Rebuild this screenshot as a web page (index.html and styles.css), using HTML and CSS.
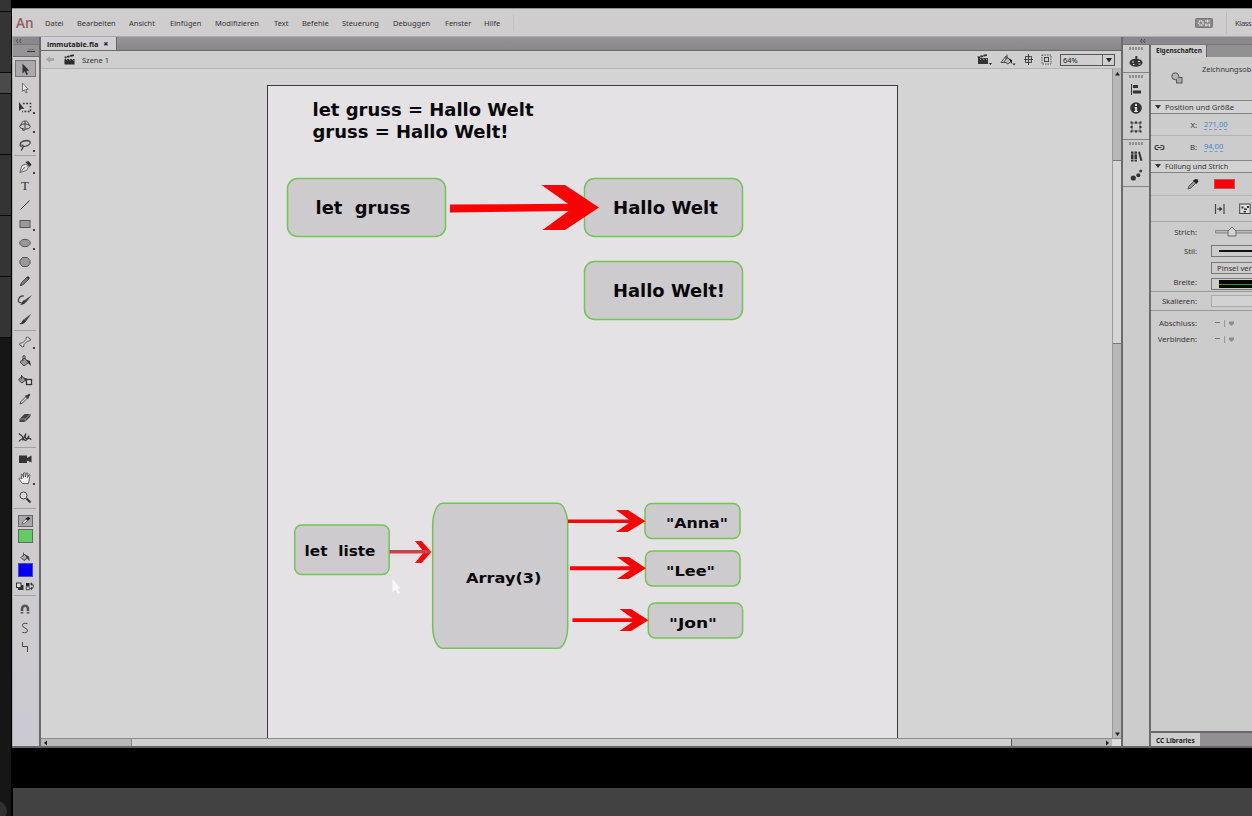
FILE: index.html
```html
<!DOCTYPE html>
<html lang="de">
<head>
<meta charset="utf-8">
<title>immutable.fla</title>
<link rel="stylesheet" href="styles.css">
</head>
<body>
<div class="screen">
<aside class="edge"><i class="e1"></i><i class="e2"></i><i class="e3"></i><i class="e2"></i><i class="e2"></i><i class="e2"></i><i class="e2"></i><i class="e4"></i><svg width="11" height="20" viewBox="0 0 11 20"><circle cx="-3" cy="15" r="10" fill="#303030"/></svg></aside>
<div class="main">
<div class="app">
<header class="menubar">
  <span class="logo">An</span>
  <nav class="menu"><span>Datei</span><span>Bearbeiten</span><span>Ansicht</span><span>Einfügen</span><span>Modifizieren</span><span>Text</span><span>Befehle</span><span>Steuerung</span><span>Debuggen</span><span>Fenster</span><span>Hilfe</span></nav>
  <div class="workspace">
    <svg width="18" height="10" viewBox="0 0 18 10"><rect x=".5" y=".5" width="17" height="9" rx="1" fill="#8b888a" stroke="#777"/><circle cx="6" cy="5" r="2.2" fill="none" stroke="#ddd" stroke-width="1.6" stroke-dasharray="1.2 .6"/><path d="M10 3h5M12.5 1.5v3M10 7h5M11 5.5v3M14.5 5.5v3" stroke="#ddd"/></svg>
    <span class="ws-name">Klass</span>
  </div>
</header>
<div class="body">
<div class="tools">
  <div class="tools-head"><span class="strip"><svg width="6" height="4" viewBox="0 0 6 4"><path d="M2 0L.5 2 2 4M5 0L3.5 2 5 4" fill="none" stroke="#444" stroke-width=".8"/></svg></span><span class="grip"><svg width="8" height="5" viewBox="0 0 8 5"><path d="M1 1.500h6" stroke="#777"/><path d="M0 3.500h8" stroke="#333"/></svg></span></div>
  <div class="group g1">
    <div class="tool on"><svg width="16" height="16" viewBox="0 0 16 16"><path d="M5.500 2.500v10l2.300-2.200 1.600 3.700 1.600-.8-1.600-3.400h3z" fill="#333"/></svg></div>
    <div class="tool"><svg width="16" height="16" viewBox="0 0 16 16"><path d="M5.500 3v8.500l1.900-1.800 1.500 3.300 1.200-.6-1.400-3.100h2.600z" fill="#eee" stroke="#555" stroke-width=".8"/></svg></div>
    <div class="tool more"><svg width="16" height="16" viewBox="0 0 16 16"><path d="M2 3v9l2.500-2.200 2.800.1z" fill="#333"/><path d="M6 4.500h7.500v8H5" fill="none" stroke="#333" stroke-width="1.500" stroke-dasharray="1.700 1.600"/></svg></div>
    <div class="tool more"><svg width="16" height="16" viewBox="0 0 16 16"><ellipse cx="8" cy="8.500" rx="5.300" ry="2.600" fill="none" stroke="#444"/><path d="M4 8Q4 3 8 3t4 5" fill="none" stroke="#555"/><path d="M8 3v7M9 10.500l-2.500 2.500M5 10l1.500 3" fill="none" stroke="#444"/></svg></div>
    <div class="tool more"><svg width="16" height="16" viewBox="0 0 16 16"><path d="M4.500 10Q2 8 4 5.500 6 3.500 10 3.500 14 4 13 6.500 11 9.500 6 9.500M4.500 8q2 0 1.500 2T4 13.500" fill="none" stroke="#444" stroke-width="1.300"/></svg></div>
  </div>
  <div class="group g2">
    <div class="tool more"><svg width="16" height="16" viewBox="0 0 16 16"><path d="M3 13.500q1-5 2-7l4-1.500 2.500 3-2 3.500zM3 13.500L8 8" fill="#ddd" stroke="#555" stroke-width=".8"/><path d="M8.500 3l3-1 3 3.500-2 2.500z" fill="#333"/></svg></div>
    <div class="tool"><span class="type">T</span></div>
    <div class="tool"><svg width="16" height="16" viewBox="0 0 16 16"><path d="M3.500 12.500l9-9" stroke="#333"/></svg></div>
    <div class="tool more"><svg width="16" height="16" viewBox="0 0 16 16"><rect x="3" y="4.500" width="10" height="7" fill="#999" stroke="#555"/></svg></div>
    <div class="tool more"><svg width="16" height="16" viewBox="0 0 16 16"><ellipse cx="8" cy="8" rx="5.300" ry="3.700" fill="#999" stroke="#555"/></svg></div>
    <div class="tool"><svg width="16" height="16" viewBox="0 0 16 16"><path d="M5.500 3.500h5L13 6.500v3l-2.500 3h-5L3 9.500v-3z" fill="#999" stroke="#555"/></svg></div>
    <div class="tool"><svg width="16" height="16" viewBox="0 0 16 16"><path d="M3.500 12.500l1-3L10 4l2 2-5.500 5.500z" fill="#777" stroke="#444" stroke-width=".8"/><path d="M9.500 4.500L11 3l2 2-1.500 1.500zM3 13l.7-2 1.300 1.300z" fill="#333"/></svg></div>
    <div class="tool"><svg width="16" height="16" viewBox="0 0 16 16"><path d="M7 4Q3 3.500 1.500 7q-1 4 3 3.500" fill="none" stroke="#444" stroke-width="1.200"/><path d="M15 3L9 10.500 7 8.500z" fill="#444"/><path d="M7 8l2 2q-2 3.500-6 2.500 2-.7 2.200-2.500z" fill="#333"/></svg></div>
    <div class="tool"><svg width="16" height="16" viewBox="0 0 16 16"><path d="M14.500 2.500L9.300 10 7.300 8z" fill="#444"/><path d="M7 8l2.300 2q-2.300 3.800-7 3 2.500-1 3-3z" fill="#333"/></svg></div>
  </div>
  <div class="group g3">
    <div class="tool more"><svg width="16" height="16" viewBox="0 0 16 16"><path d="M5.500 9L9 5.500Q8.500 3 10.500 3 12 3 12 4.500 13.800 4.500 13.500 6 13 7.500 10.500 7L7 10.500Q7.500 13 5.500 13 4.300 13 4.200 11.500 2.500 11.500 2.500 10 3 8.500 5.500 9z" fill="#ddd" stroke="#444" stroke-width=".9"/></svg></div>
    <div class="tool"><svg width="16" height="16" viewBox="0 0 16 16"><path d="M3 9l4.500-4 4 4.500-4.500 3.500z" fill="#999" stroke="#444"/><path d="M6 8V3q1.500-1 2 0v3" fill="none" stroke="#444"/><path d="M9 6.500l4 1.500 1 5-2.500-2.500z" fill="#333"/></svg></div>
    <div class="tool"><svg width="16" height="16" viewBox="0 0 16 16"><path d="M1.500 8l3.500-4 3.500 4L5 11z" fill="#999" stroke="#444"/><path d="M4.500 7V3M7 6l3 1v4L8.500 8z" stroke="#444" fill="#333"/><rect x="9.500" y="7.500" width="5" height="5" fill="#ddd" stroke="#333" stroke-width="1.300"/></svg></div>
    <div class="tool"><svg width="16" height="16" viewBox="0 0 16 16"><path d="M3 13l1-2.500L9 5.500 10.500 7l-5 5z" fill="#ddd" stroke="#444"/><path d="M8 5l1-1 1 .5L12 2.500l1.500 1.500-2 2 .5 1-1 1z" fill="#333"/></svg></div>
    <div class="tool"><svg width="16" height="16" viewBox="0 0 16 16"><path d="M2.500 9l5-5H14l-1 3-5 5H2.500z" fill="#444"/><path d="M3 9h5.500l5-5M8.500 9l-.5 3" fill="none" stroke="#aaa" stroke-width=".7"/></svg></div>
    <div class="tool"><svg width="16" height="16" viewBox="0 0 16 16"><path d="M2 4.500l3.500 3 .5 3 3-6q-1.500 4 0 5t3-3M2 12.500q3-4 5-2t4-1q2-1 3 1.500" fill="none" stroke="#333" stroke-width="1.200"/></svg></div>
  </div>
  <div class="group g4">
    <div class="tool"><svg width="16" height="16" viewBox="0 0 16 16"><path d="M2 4.500h8V7l4.500-2.500v7L10 9.500V12H2z" fill="#333"/></svg></div>
    <div class="tool more"><svg width="16" height="16" viewBox="0 0 16 16"><path d="M5.500 13.500L2 9q0-1.500 1.500-1L5 9 4 4.500q1-1 1.500.3L6.500 7.500 6.500 3q1-1 1.500 0l.3 4L9.500 3q1-.7 1.300.3L10.500 7.500 12 4.800q1.200-.4 1 .8L11.500 13.500z" fill="#eee" stroke="#444" stroke-width=".8"/></svg></div>
    <div class="tool"><svg width="16" height="16" viewBox="0 0 16 16"><circle cx="6.500" cy="6.500" r="3.500" fill="#ddd" stroke="#444"/><path d="M9.500 9.500l4 4" stroke="#333" stroke-width="2"/></svg></div>
  </div>
  <div class="group g5">
    <div class="swatch-btn"><svg width="13" height="10" viewBox="0 0 14 11"><path d="M3 9l1-2.500L9 2l2 1.500L6 8z" fill="#ddd" stroke="#333" stroke-width=".7"/><path d="M7 3L10 .8l2.500 2-3 2.500z" fill="#222"/></svg></div>
    <div class="swatch green"></div>
    <div class="bucket"><svg width="16" height="14" viewBox="0 0 16 14"><path d="M4 8.500l3.500-3.500 3 4-3.500 2.500z" fill="#aaa" stroke="#444"/><path d="M6.500 7V3.500M9 6.500l2.500 1 .8 4-1.800-2z" stroke="#444" stroke-width=".8" fill="#333"/></svg></div>
    <div class="swatch blue"></div>
    <div class="swap"><svg width="20" height="9" viewBox="0 0 20 9"><rect x="3.500" y="3.500" width="4.500" height="4" fill="#333" stroke="#333"/><rect x="1.500" y="1" width="4.500" height="4.500" fill="#ddd" stroke="#333"/><rect x="11" y="1" width="3.500" height="3" fill="#222"/><rect x="11.300" y="4.800" width="3" height="3" fill="#ddd" stroke="#333" stroke-width=".8"/><path d="M16 2h1.500q2 2.500 0 4.500H16" fill="none" stroke="#333"/><path d="M17 .3v3.400L15 2zM17 4.800v3.400L15 6.500z" fill="#333"/></svg></div>
  </div>
  <div class="group g6">
    <div class="tool"><svg width="16" height="16" viewBox="0 0 16 16"><path d="M5 12.500V7.800a3 3 0 0 1 6 0v4.700" fill="none" stroke="#555" stroke-width="2.600"/><path d="M3.500 10.500h3M9.500 10.500h3" stroke="#ddd" stroke-width=".8"/></svg></div>
    <div class="tool"><svg width="16" height="16" viewBox="0 0 16 16"><path d="M10.500 3.700Q5.500 2.300 5.500 5.300 5.500 7 8 8q2.600 1 2.500 2.800Q10 13.500 5.300 12.300" fill="none" stroke="#444"/></svg></div>
    <div class="tool"><svg width="16" height="16" viewBox="0 0 16 16"><path d="M5.500 3v4.500h5V13" fill="none" stroke="#444"/></svg></div>
  </div>
</div>
<div class="doc">
  <div class="tabs"><div class="tab"><span>immutable.fla</span><b>×</b></div></div>
  <div class="scenebar">
    <svg width="8" height="7" viewBox="0 0 8 7"><path d="M0 3.500L4 0v2h4v3H4v2z" fill="#a5a5a5"/></svg>
    <svg class="clap" width="11" height="11" viewBox="0 0 11 11"><path d="M.5 5h10v5.500H.5zM.3 2.800L9.500.3l.6 1.700L1 4.500z" fill="#2b2b2b"/><path d="M2 2l1.500 2M5 1.200l1.500 2M2 5l1.300 1.500M5 5l1.300 1.500M8 5l1.300 1.500" stroke="#ccc" stroke-width=".8"/></svg>
    <span class="scene">Szene 1</span>
    <div class="sceneicons">
      <svg width="16" height="13" viewBox="0 0 16 13"><path d="M1 5h10v6H1zM.5 3.500L9.500 1l.6 1.700L1 5.500z" fill="#333"/><path d="M2.500 3l1.500 2M5.500 2l1.500 2M3 5.500l1 1.500M6 5.500l1 1.500M9 5.500l1 1.500" stroke="#ccc" stroke-width=".7"/><path d="M12 10h3l-1.500 2z" fill="#222"/></svg>
      <svg width="16" height="13" viewBox="0 0 16 13"><path d="M1 9.500L6 3v6.500z" fill="#ddd" stroke="#444"/><path d="M4 8.500l3.500-4 4 3.500-3.500 3z" fill="#bbb" stroke="#444"/><path d="M7 6V1.500" stroke="#444"/><path d="M9 5.500l3 1.500v4l-1.500-2z" fill="#222"/><path d="M12.500 10.500h3l-1.500 2z" fill="#222"/></svg>
      <svg width="11" height="13" viewBox="0 0 11 13"><path d="M5.500 1v11M1 6.500h9M2.500 3.500h6v6h-6z" fill="none" stroke="#444"/></svg>
      <svg width="11" height="13" viewBox="0 0 11 13"><rect x="1" y="2" width="9" height="9" fill="none" stroke="#555" stroke-dasharray="1.500 1"/><rect x="3.500" y="4.500" width="4" height="4" fill="none" stroke="#444"/></svg>
    </div>
    <div class="zoom"><span>64%</span><i><svg width="6" height="5" viewBox="0 0 6 5"><path d="M0 0h6L3 4.500z" fill="#222"/></svg></i></div>
  </div>
  <div class="view">
    <svg class="stage" width="1071" height="669" viewBox="41 69 1071 669">
      <rect x="267.500" y="85.500" width="630" height="660" fill="#e4e2e4" stroke="#3c3a3c"/>
      <g fill="#cdcbcd" stroke="#71c556" stroke-width="1.500">
        <rect x="287.500" y="178.500" width="158" height="58" rx="10"/>
        <rect x="584.500" y="178.500" width="158" height="58" rx="10"/>
        <rect x="584.500" y="261.500" width="158" height="58" rx="10"/>
        <rect x="294.700" y="525" width="94.500" height="49.500" rx="7"/>
        <rect x="432.700" y="503.300" width="135" height="145" rx="10" ry="22"/>
        <rect x="645" y="503.500" width="95" height="35" rx="7"/>
        <rect x="645.500" y="551" width="94.500" height="35" rx="7"/>
        <rect x="648.300" y="603" width="94.300" height="35" rx="7"/>
      </g>
      <g fill="#fe0000">
        <path d="M450 204.500L568 203.800 541.500 185H565L599 207.500 565 230H542.500L568.500 211 450 212.500z"/>
        <path d="M568 519.500H629L616 510H628L645.500 521.300 627.500 532H616L629 523H568z"/>
        <path d="M570 566.300H630L617 557H629L646 568.300 628.500 579H617L630 570.200H570z"/>
        <path d="M572.500 618.300H632.500L619.500 609H631L648.500 620.300 631 631H619.500L632.500 622H572.500z"/>
        <path d="M415 541H421.500L431.500 552 421.500 563H415L424 552z"/>
        <path d="M389.500 550H429L431.500 552 429 553.600H389.500z" fill="#cb4348"/>
      </g>
      <path d="M392.500 579v13l3-2.500 2.500 4.500 2-1-2.500-4.500h3z" fill="#f8f8fc"/>
      <g class="label">
        <text x="312.500" y="115.700" textLength="221" lengthAdjust="spacingAndGlyphs">let gruss = Hallo Welt</text>
        <text x="312.500" y="137.700" textLength="196" lengthAdjust="spacingAndGlyphs">gruss = Hallo Welt!</text>
        <text x="315.500" y="214.300" textLength="95" lengthAdjust="spacingAndGlyphs">let  gruss</text>
        <text x="613" y="214.300" textLength="105" lengthAdjust="spacingAndGlyphs">Hallo Welt</text>
        <text x="613" y="297" textLength="112" lengthAdjust="spacingAndGlyphs">Hallo Welt!</text>
      </g>
      <g class="label small">
        <text x="304.500" y="556.200" textLength="71" lengthAdjust="spacingAndGlyphs">let  liste</text>
        <text x="466" y="582.600" textLength="75.500" lengthAdjust="spacingAndGlyphs">Array(3)</text>
        <text x="666" y="528" textLength="62" lengthAdjust="spacingAndGlyphs">"Anna"</text>
        <text x="666" y="575.500" textLength="49" lengthAdjust="spacingAndGlyphs">"Lee"</text>
        <text x="669" y="627.700" textLength="48" lengthAdjust="spacingAndGlyphs">"Jon"</text>
      </g>
    </svg>
    <div class="vscroll"><i class="trk a"><svg width="7" height="5" viewBox="0 0 7 5"><path d="M3.500 0l2.500 3.500H1z" fill="#222"/></svg></i><i class="thumb"></i><i class="trk b"><svg width="7" height="5" viewBox="0 0 7 5"><path d="M3.500 4L6 .5H1z" fill="#222"/></svg></i></div>
  </div>
  <div class="hscroll"><i class="htrk ha"><svg width="5" height="6" viewBox="0 0 5 6"><path d="M0 3l3-2.500v5z" fill="#222"/></svg></i><i class="hthumb"></i><i class="htrk hb"><svg width="5" height="6" viewBox="0 0 5 6"><path d="M4 3L1 .5v5z" fill="#222"/></svg></i><i class="corner"></i></div>
</div>
<div class="right">
  <div class="rstrip"><svg width="6" height="4" viewBox="0 0 6 4"><path d="M2 0L.5 2 2 4M5 0L3.500 2 5 4" fill="none" stroke="#333" stroke-width=".8"/></svg></div>
  <div class="rcols">
  <div class="dock">
    <div class="dgroup d1"><i class="dots"></i><div class="dicon"><svg width="14" height="12" viewBox="0 0 14 12"><ellipse cx="7" cy="6.700" rx="6.500" ry="4" fill="#333"/><path d="M3 6h2M4 8.500h1.500M9 5.500h2M9.500 8h2" stroke="#ddd" stroke-width="1.200"/><path d="M7.300 0v9" stroke="#333" stroke-width="2"/></svg></div></div>
    <div class="dgroup d2"><i class="dots"></i>
      <div class="dicon"><svg width="12" height="12" viewBox="0 0 12 12"><path d="M1.500 1v11" stroke="#333"/><path d="M3 2h5v3H3zM3 7.500h8v3H3z" fill="#333"/></svg></div>
      <div class="dicon"><svg width="12" height="12" viewBox="0 0 12 12"><circle cx="6" cy="6" r="5.800" fill="#333"/><path d="M5 2h2v2H5zM4.500 5H7v4h1v1H4V9h1V6h-.5z" fill="#ddd"/></svg></div>
      <div class="dicon"><svg width="12" height="12" viewBox="0 0 12 12"><rect x="2" y="2" width="8" height="8" fill="none" stroke="#666"/><path d="M.5.500h2v2h-2zM5 .5h2v2H5zM9.500.5h2v2h-2zM.5 5h2v2h-2zM9.500 5h2v2h-2zM.5 9.500h2v2h-2zM5 9.500h2v2H5zM9.500 9.500h2v2h-2z" fill="#333"/></svg></div>
    </div>
    <div class="dgroup d3"><i class="dots"></i>
      <div class="dicon"><svg width="13" height="12" viewBox="0 0 13 12"><path d="M1 1.500h2.500v10H1zM4.500 1.500H7v10H4.500zM8 2l1.800-.6 2.700 9-2 .7z" fill="#333"/><path d="M1 4h2.500M4.500 4H7M1 9.500h6" stroke="#bbb" stroke-width=".7"/></svg></div>
      <div class="dicon"><svg width="13" height="12" viewBox="0 0 13 12"><circle cx="3.300" cy="9" r="2.600" fill="#333"/><circle cx="8.300" cy="6.300" r="2" fill="#333"/><circle cx="10.700" cy="2" r="1.600" fill="#444"/></svg></div>
    </div>
  </div>
  <div class="panel">
    <div class="ptabs"><span class="ptab">Eigenschaften</span></div>
    <div class="phead"><svg width="12" height="12" viewBox="0 0 12 12"><rect x="5.500" y="5.500" width="5.500" height="5.500" fill="#aaa" stroke="#555"/><circle cx="4.300" cy="4.300" r="3.500" fill="#b4b4b4" stroke="#555"/><path d="M6 6h3v3H6z" fill="#aaa"/></svg><span>Zeichnungsob</span></div>
    <div class="psec"><svg width="6" height="4" viewBox="0 0 6 4"><path d="M0 0h6L3 4z" fill="#333"/></svg><span>Position und Größe</span></div>
    <div class="prow rx"><span class="lab">X:</span><a>271,00</a></div>
    <div class="prow rb"><svg width="11" height="7" viewBox="0 0 11 7"><path d="M4.500 1.500H3a2 2 0 0 0 0 4h1.500M6.500 1.500H8a2 2 0 0 1 0 4H6.500M3.500 3.500h4" fill="none" stroke="#333" stroke-width="1.100"/></svg><span class="lab">B:</span><a>94,00</a></div>
    <div class="psec s2"><svg width="6" height="4" viewBox="0 0 6 4"><path d="M0 0h6L3 4z" fill="#333"/></svg><span>Füllung und Strich</span></div>
    <div class="prow rc"><svg width="12" height="12" viewBox="0 0 12 12"><path d="M1 11l1-3 5-5 2 2-5 5z" fill="#999" stroke="#444" stroke-width=".8"/><path d="M6 2.500L8.500 1l2.500.5.3 2L9.500 6z" fill="#222"/></svg><i class="red"></i></div>
    <div class="prow ri"><svg width="12" height="12" viewBox="0 0 12 12"><path d="M1.500 1v10M10 1v10" stroke="#444" stroke-width="1.200"/><path d="M3 6h3" stroke="#333"/><path d="M5.500 3.500L8.500 6l-3 2.500z" fill="#333"/></svg><svg width="12" height="12" viewBox="0 0 12 12"><rect x=".7" y="1" width="10.500" height="9.500" fill="#ddd" stroke="#444"/><path d="M2.500 3.500h2v2h-2zM5 5.500h3v1.500H5zM8 3h2v2H8zM4.500 8h2.500v1.500H4.500z" fill="#333"/></svg></div>
    <div class="prow rs"><span class="lab">Strich:</span><svg width="41" height="12" viewBox="0 0 41 12"><path d="M.5 4.500H41v2.500H.5z" fill="#bbb" stroke="#777" stroke-width=".8"/><path d="M13 10V5L17 1l4 4v5z" fill="#d4d2d4" stroke="#666"/></svg></div>
    <div class="prow rt"><span class="lab">Stil:</span><div class="field"><i class="line"></i></div></div>
    <div class="prow rp"><div class="field btn">Pinsel ver</div></div>
    <div class="prow rw"><span class="lab">Breite:</span><div class="field"><i class="profile"></i></div></div>
    <div class="prow rk"><span class="lab">Skalieren:</span><div class="field off"></div></div>
    <div class="prow ra"><span class="lab">Abschluss:</span><svg width="22" height="8" viewBox="0 0 22 8"><path d="M2 3.500h5" stroke="#777"/><path d="M11.500 1v7" stroke="#999"/><path d="M16 2.500h5v2L18.500 7 16 4.500z" fill="#8d8d8d"/></svg></div>
    <div class="prow ra"><span class="lab">Verbinden:</span><svg width="22" height="8" viewBox="0 0 22 8"><path d="M2 3.500h5" stroke="#777"/><path d="M11.500 1v7" stroke="#999"/><path d="M16 2.500h5v2L18.500 7 16 4.500z" fill="#8d8d8d"/></svg></div>
    <div class="cc"><span>CC Libraries</span></div>
  </div>
  </div>
</div>
</div>
</div>
<footer class="bottom"></footer>
</div>
</div>
</body>
</html>
```

FILE: styles.css
```css
* { box-sizing: border-box; }
html, body { margin: 0; background: #000; overflow: hidden; }
body { font-family: "Noto Sans", "Open Sans", sans-serif; font-size: 7.5px; line-height: 10px; color: #333; }
svg { display: block; flex: none; }
i { font-style: normal; display: block; }
span { white-space: pre; }
.screen { width: 1252px; height: 816px; display: flex; overflow: hidden; background: #000; }

.edge { width: 11px; margin-right: 1px; flex: none; display: flex; flex-direction: column; }
.edge i { border-bottom: 1px solid #0a0a0a; background: #343434; flex: none; }
.edge .e1 { height: 12px; }
.edge .e2 { height: 61px; }
.edge .e3 { height: 21px; background: #4a4a4a; }
.edge .e4 { flex: 1; background: #161616; border: 0; }
.edge svg { background: #161616; }

.main { flex: 1; min-width: 0; display: flex; flex-direction: column; }
.app { margin-top: 8px; height: 740px; display: flex; flex-direction: column; border-top: 1px solid #929092; border-bottom: 2px solid #666; background: #cdcccd; }
.bottom { height: 28px; margin: 40px 0 0 1px; background: #424242; }

.menubar { height: 28px; flex: none; display: flex; align-items: center; background: #d0cdcf; border-bottom: 1px solid #aba9ab; }
.logo { width: 33px; padding-left: 4px; font: 600 13.5px/16px "Open Sans", sans-serif; color: #925f59; }
.menu { display: grid; grid-template-columns: 32px 52px 41px 45px 59px 28px 40px 51px 52px 39px 29px; height: 17px; align-items: center; border-right: 1px solid #c5c1c4; }
.workspace { margin-left: auto; display: flex; align-items: center; height: 27px; }
.ws-name { margin-left: 13px; padding-left: 8px; width: 26px; line-height: 22px; border-left: 1px solid #bfbcbe; letter-spacing: -.35px; }

.body { flex: 1; min-height: 0; display: flex; }
.tools { width: 29px; flex: none; border-right: 2px solid #6b6a6b; border-left: 1px solid #aaa; background: linear-gradient(#cecccd 70%, #cbcad0); }
.tools-head { height: 20px; background: #969496; border-bottom: 1px solid #6e6d6e; }
.strip { display: flex; height: 8px; padding: 2px 0 0 3px; border-bottom: 1px solid #7b7a7b; background: #8a888a; }
.grip { display: flex; height: 11px; justify-content: flex-end; padding: 3px 4px 0 0; }
.group { display: flex; flex-direction: column; align-items: center; margin: 0 3px 0 1px; border-bottom: 1px solid #a3a2a3; }
.tool { position: relative; width: 22px; height: 19px; display: flex; justify-content: center; align-items: center; }
.tool.on { width: 21px; height: 17px; margin: 1px 0; background: #aaa8aa; border: 1px solid #747274; }
.tool.more::after { content: ""; position: absolute; right: 1px; bottom: 2px; width: 2px; height: 2px; background: #444; }
.type { font: 13px/16px "Liberation Serif", serif; }
.g1 { height: 99px; padding-top: 2px; }
.g2 { height: 175px; padding-top: 1px; }
.g3 { height: 117px; padding-top: 1px; }
.g4 { height: 61px; padding-top: 1px; }
.g5 { height: 87px; padding-top: 6px; }
.g6 { height: 62px; padding-top: 3px; border: 0; }
.swatch-btn { width: 15px; height: 12px; background: #a9a7a9; border: 1px solid #666; }
.swatch { width: 15px; height: 14px; border: 1px solid #666; }
.green { margin-top: 2px; background: #60cc62; }
.blue { background: #0000fa; border-color: #4949b5; }
.bucket { height: 14px; margin: 6px 0 0; }
.swap { margin-top: 5px; }

.doc { width: 1080px; flex: none; display: flex; flex-direction: column; }
.tabs { height: 14px; flex: none; background: linear-gradient(#979597, #898789); border-bottom: 1px solid #6b6a6b; }
.tab { width: 76px; height: 13px; display: flex; align-items: center; padding-left: 6px; gap: 5px; background: #d1cfd1; border-right: 1px solid #666; color: #222; font-weight: 700; font-size: 7.3px; }
.tab b { font-size: 9px; }
.scenebar { height: 18px; flex: none; display: flex; align-items: center; padding-left: 5px; background: #d0cfd0; border-bottom: 1px solid #b5b4b5; }
.clap { margin-left: 10px; }
.scene { margin-left: 7px; }
.sceneicons { margin-left: auto; display: flex; gap: 8px; }
.sceneicons svg:nth-child(2) { margin-left: -1px; }
.sceneicons svg:nth-child(3) { margin-left: -1px; }
.sceneicons svg:nth-child(4) { margin-left: -1px; }
.zoom { width: 55px; height: 12px; margin: 0 6px 0 8px; display: flex; justify-content: space-between; align-items: center; border: 1px solid #555; padding-left: 2px; color: #222; }
.zoom i { width: 12px; height: 10px; padding: 3px; border-left: 1px solid #666; }
.view { height: 669px; flex: none; display: flex; }
.stage { background: #d5d4d5; }
.label { font: bold 17.4px "DejaVu Sans", sans-serif; fill: #080808; }
.label text { white-space: pre; }
.label.small { font-size: 14.7px; }
.vscroll { width: 9px; display: flex; flex-direction: column; border-left: 1px solid #999; }
.trk { background: #b9b8b9; padding-left: 1px; }
.trk.a { height: 92px; padding-top: 3px; border-bottom: 1px solid #777; }
.thumb { height: 182px; background: #d7d6d7; }
.trk.b { flex: 1; border-top: 1px solid #777; display: flex; flex-direction: column; justify-content: flex-end; padding-bottom: 1px; }
.hscroll { height: 8px; display: flex; border-top: 1px solid #8d8c8d; }
.htrk { padding-top: 1px; background: #b9b8b9; }
.ha { width: 91px; padding-left: 3px; border-right: 1px solid #888; }
.hthumb { width: 879px; background: #d2d1d2; }
.hb { width: 101px; display: flex; justify-content: flex-end; border-left: 1px solid #555; padding-right: 2px; }
.corner { flex: 1; background: #dddcdd; }

.right { flex: 1; min-width: 0; display: flex; flex-direction: column; border-left: 2px solid #6b6a6b; }
.rstrip { height: 8px; flex: none; background: #8a888a; border-bottom: 1px solid #777; padding: 2px 0 0 17px; }
.rcols { flex: 1; min-height: 0; display: flex; }
.dock { width: 28px; flex: none; border-right: 2px solid #6b6a6b; background: #cdcccd; }
.dgroup { border-bottom: 1px solid #858485; display: flex; flex-direction: column; align-items: center; }
.dots { width: 14px; height: 3px; margin: 2px 0 4px; flex: none; background: repeating-linear-gradient(90deg, #8f8e8f 0 2px, transparent 2px 3px); }
.d1 { height: 28px; }
.d2 { height: 67px; }
.d3 { height: 47px; }
.dicon { height: 19.3px; flex: none; display: flex; align-items: center; justify-content: center; }
.d1 .dicon { height: 15px; }
.d2 .dots { margin-bottom: 1px; }
.d3 .dots { margin-bottom: 1px; }

.panel { flex: 1; min-width: 0; display: flex; flex-direction: column; overflow: hidden; background: #cdcccd; font-size: 7.7px; }
.ptabs { height: 12px; flex: none; display: flex; background: #929092; }
.ptab { width: 56px; padding-left: 5px; line-height: 12px; font-size: 6.5px; font-weight: 700; color: #222; background: #cfcecf; border-right: 1px solid #666; }
.phead { height: 43px; flex: none; display: flex; padding: 15px 0 0 20px; font-size: 7.4px; }
.phead span { margin: -8px 0 0 19px; }
.psec { height: 14px; flex: none; display: flex; align-items: center; gap: 4px; padding: 0 0 1px 4px; background: #d3d2d3; border: solid #858485; border-width: 1px 0; font-size: 7.6px; }
.psec.s2 { height: 13px; font-size: 7.4px; }
.prow { display: flex; align-items: center; flex: none; }
.lab { width: 46px; text-align: right; flex: none; }
.prow a { margin-left: 7px; line-height: 9px; color: #3f86c8; border-bottom: 1px dashed #6f9ecb; font-size: 7.5px; }
.rx { height: 22px; border-bottom: 1px solid #b4b3b4; }
.rb { height: 24px; padding: 0 0 2px 3px; }
.rb .lab { width: 32px; }
.rc { height: 23px; padding-left: 36px; border-bottom: 1px solid #b4b3b4; }
.red { width: 21px; height: 10px; margin-left: 15px; background: #fe0000; border: 1px solid #b55; }
.ri { height: 26px; padding-left: 63px; gap: 13px; border-bottom: 1px solid #aaa9aa; }
.rs { height: 20px; }
.rs svg { margin-left: 18px; }
.rt, .rp { height: 17px; }
.rp { padding-left: 46px; }
.rw { height: 16px; border-bottom: 1px solid #999899; }
.rw .lab { margin-top: -3px; }
.rk { height: 19px; border-bottom: 1px solid #999899; }
.ra { height: 16px; padding-bottom: 2px; }
.rk + .ra { margin-top: 5px; }
.ra svg { margin-left: 16px; }
.field { margin-left: 14px; width: 60px; height: 12px; flex: none; border: 1px solid #777; padding: 1px 0 0 7px; }
.btn { line-height: 10px; padding: 0 0 0 5px; white-space: pre; }
.off { border-color: #aaa; background: #d3d2d3; }
.line { height: 2px; margin-top: 3px; background: #111; }
.profile { height: 8px; background: linear-gradient(#080808 4px, #2c9a2c 4px 5px, #080808 5px); }
.cc { margin-top: auto; height: 15px; flex: none; display: flex; background: #929092; border-top: 2px solid #6b6a6b; }
.cc span { width: 49px; padding-left: 5px; background: #cfcecf; font-size: 6.6px; font-weight: 700; line-height: 15px; color: #222; }
```
